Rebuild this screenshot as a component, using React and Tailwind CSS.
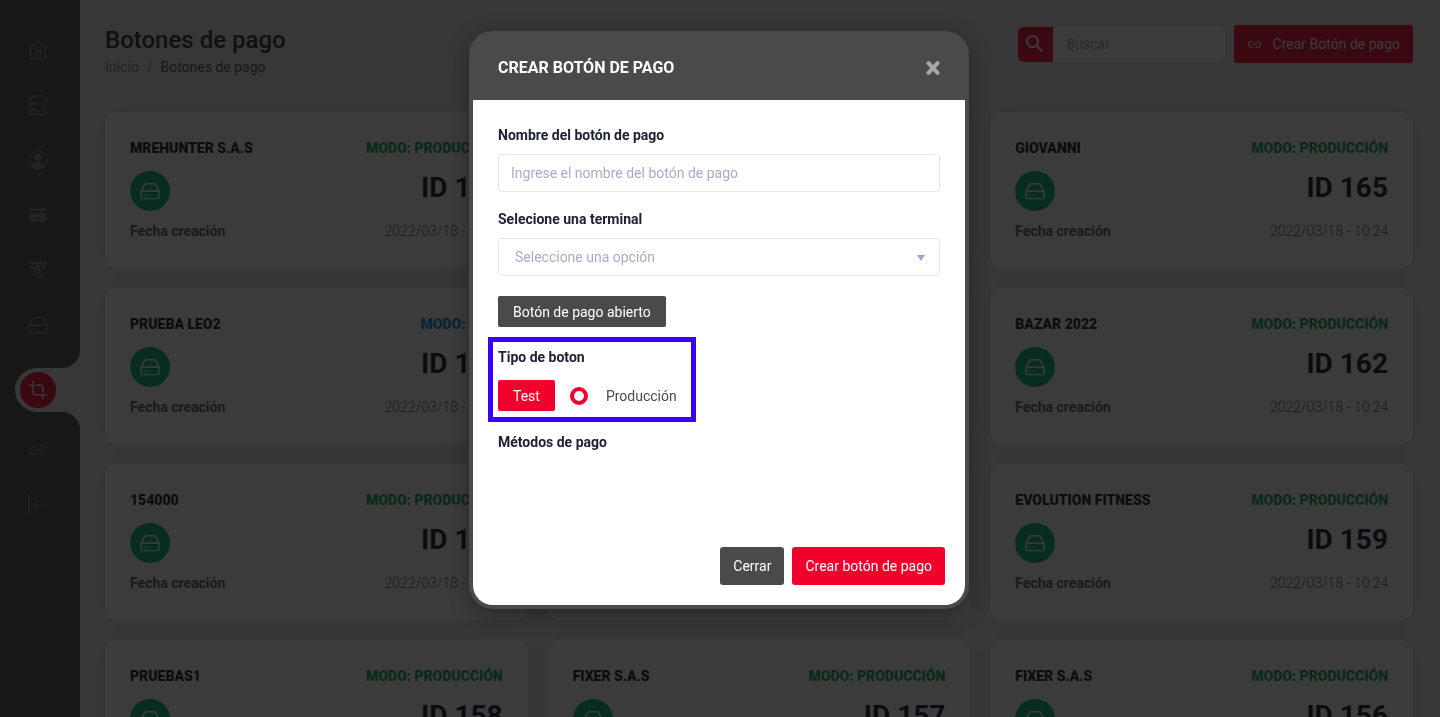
import { useState } from 'react';
import { BsPersonCircle } from 'react-icons/bs';
import { IoLinkOutline, IoCropOutline } from 'react-icons/io5';
import { MdSearch } from 'react-icons/md';

const BUTTONS = [
  { id: 167, name: 'MREHUNTER S.A.S', mode: 'PRODUCCIÓN' },
  { id: 166, name: 'FIXER S.A.S', mode: 'PRODUCCIÓN' },
  { id: 165, name: 'GIOVANNI', mode: 'PRODUCCIÓN' },
  { id: 164, name: 'PRUEBA LEO2', mode: 'TEST' },
  { id: 163, name: 'FIXER S.A.S', mode: 'PRODUCCIÓN' },
  { id: 162, name: 'BAZAR 2022', mode: 'PRODUCCIÓN' },
  { id: 161, name: '154000', mode: 'PRODUCCIÓN' },
  { id: 160, name: 'FIXER S.A.S', mode: 'PRODUCCIÓN' },
  { id: 159, name: 'EVOLUTION FITNESS', mode: 'PRODUCCIÓN' },
  { id: 158, name: 'PRUEBAS1', mode: 'PRODUCCIÓN' },
  { id: 157, name: 'FIXER S.A.S', mode: 'PRODUCCIÓN' },
  { id: 156, name: 'FIXER S.A.S', mode: 'PRODUCCIÓN' },
];

const HomeIcon = () => (
  <svg className="w-5 h-5" viewBox="0 0 20 20" fill="none" stroke="currentColor" strokeWidth="1.2">
    <path d="M.8 8.2 10 1l9.200 7.200M2.700 7v12.200h14.600V7M7.400 19v-7.600h5.200V19" />
  </svg>
);

const ShopIcon = () => (
  <svg className="w-5 h-5" viewBox="0 0 20 20" fill="none" stroke="currentColor" strokeWidth="1.200" strokeLinejoin="round">
    <path d="M5 1h10l4.200 4.400V7a2.300 2.300 0 0 1-4.600 0 2.300 2.300 0 0 1-4.600 0 2.300 2.300 0 0 1-4.600 0A2.300 2.300 0 0 1 .8 7V5.400L5 1ZM2.200 10v9M17.800 10v9M.5 19.300h19M4.800 12v4.200h10.400V12" />
  </svg>
);

const CardIcon = () => (
  <svg className="w-5 h-5" viewBox="0 0 20 20" fill="currentColor">
    <path fillRule="evenodd" d="M2.500 3.500h15a1.200 1.200 0 0 1 1.200 1.200V6H1.300V4.700a1.200 1.200 0 0 1 1.200-1.200ZM1.300 8.300h17.400v7a1.200 1.200 0 0 1-1.200 1.200h-15a1.200 1.200 0 0 1-1.200-1.200v-7Zm2 4.200v1.400h1.600v-1.400H3.300Zm3.200 0v1.400h6v-1.400h-6Z" />
  </svg>
);

const MedalIcon = () => (
  <svg className="w-5 h-5" viewBox="0 0 20 20" fill="currentColor">
    <path d="M1.600 1.800h16.800v2.400H1.600zM2.200 5h4v4.600H4.400L2.200 7.400zM7.400 5h5.200v4H7.400zM13.800 5h4v2.400l-2.200 2.200h-1.800z" />
    <circle cx="10" cy="13.800" r="4" fill="none" stroke="currentColor" strokeWidth="1.500" />
    <circle cx="10" cy="13.800" r="1.800" />
  </svg>
);

const TerminalIcon = () => (
  <svg className="w-5 h-5" viewBox="0 0 20 20" fill="none" stroke="currentColor" strokeWidth="1.400" strokeLinejoin="round">
    <path d="M6 2.800h8a1.800 1.800 0 0 1 1.600 1L19 10.200v5.600a1.800 1.800 0 0 1-1.800 1.800H2.800A1.800 1.800 0 0 1 1 15.800v-5.600l3.400-6.400a1.800 1.800 0 0 1 1.600-1ZM1 10.300h18M4.400 13.200v1.600M8.400 13.200v1.600" />
  </svg>
);

const CollapseIcon = () => (
  <svg className="w-5 h-5" viewBox="0 0 20 20" fill="none" stroke="currentColor" strokeWidth="1.200">
    <path d="M.8 0v20M19.800 10H5M10.500 4.500 5 10l5.500 5.500" />
  </svg>
);

const MENU_TOP = [
  { label: 'Inicio', Icon: HomeIcon },
  { label: 'Comercios', Icon: ShopIcon },
  { label: 'Perfil', Icon: BsPersonCircle },
  { label: 'Tarjetas', Icon: CardIcon },
  { label: 'Retiros', Icon: MedalIcon },
  { label: 'Terminales', Icon: TerminalIcon },
];

const MENU_BOTTOM = [
  { label: 'Links de pago', Icon: IoLinkOutline },
  { label: 'Contraer', Icon: CollapseIcon },
];

function MenuLink({ label, Icon }) {
  return (
    <a href="#" aria-label={label} className="flex h-[55px] w-[75px] items-center justify-center text-[#8a8a8a]">
      <Icon className="h-5 w-5" />
    </a>
  );
}

function Sidebar() {
  return (
    <nav className="flex w-20 shrink-0 flex-col bg-[#4b4b4b] pt-[22px]">
      {MENU_TOP.map((item) => (
        <MenuLink key={item.label} {...item} />
      ))}
      {/* current section, cut out of the bar */}
      <div className="relative mt-4 ml-[15px] flex h-11 items-center rounded-l-full bg-[#ebebeb] pl-[5px]">
        <svg className="absolute right-0 -top-[18px] h-[18px] w-[18px]" viewBox="0 0 18 18" fill="#ebebeb">
          <path d="M18 0v18H0A18 18 0 0 0 18 0Z" />
        </svg>
        <a href="#" aria-label="Botones de pago" aria-current="page" className="flex h-9 w-9 items-center justify-center rounded-full bg-[#f2002c] text-white">
          <IoCropOutline className="h-[22px] w-[22px]" />
        </a>
        <svg className="absolute right-0 -bottom-[18px] h-[18px] w-[18px]" viewBox="0 0 18 18" fill="#ebebeb">
          <path d="M18 18V0H0A18 18 0 0 1 18 18Z" />
        </svg>
      </div>
      <div className="pt-[10px]">
        {MENU_BOTTOM.map((item) => (
          <MenuLink key={item.label} {...item} />
        ))}
      </div>
    </nav>
  );
}

function PaymentCard({ id, name, mode }) {
  return (
    <article className="rounded-xl bg-white px-[25px] py-[25px] shadow-[0_0_30px_rgba(0,0,0,0.05)]">
      <div className="flex items-center justify-between text-sm leading-[22px] font-black text-[#181828]">
        <h2>{name}</h2>
        <span className={mode === 'TEST' ? 'text-[#008fe0]' : 'text-[#00a84c]'}>MODO: {mode}</span>
      </div>
      <div className="mt-3 flex items-start justify-between">
        <span className="flex h-10 w-10 items-center justify-center rounded-full bg-[#00b870] text-white">
          <TerminalIcon />
        </span>
        <span className="text-[28px] leading-[34px] font-bold text-[#181828]">ID {id}</span>
      </div>
      <div className="mt-2 flex items-center justify-between text-sm leading-6 text-[#5a5a5a]">
        <span className="font-bold">Fecha creación</span>
        <time className="font-light">2022/03/18 - 10:24</time>
      </div>
    </article>
  );
}

function CreateModal({ onClose }) {
  const [production, setProduction] = useState(false);

  return (
    <div className="fixed inset-0 flex items-start justify-center overflow-hidden bg-[#0a0a0a]/80 pr-0.5">
      <div
        role="dialog"
        aria-modal="true"
        aria-labelledby="modal-title"
        className="mt-[31px] w-[500px] max-w-full rounded-[24px] bg-[#4a4a4a] p-1 shadow-[0_5px_20px_rgba(0,0,0,0.35)]"
      >
        <header className="flex h-[65px] items-center justify-between px-[25px]">
          <h2 id="modal-title" className="text-base font-bold text-white">CREAR BOTÓN DE PAGO</h2>
          <button type="button" aria-label="Cerrar ventana" onClick={onClose} className="text-[#a6a6a6]">
            <svg className="h-[14px] w-[14px]" viewBox="0 0 14 14" stroke="currentColor" strokeWidth="4" strokeLinecap="round">
              <path d="m2.500 2.200 9 9.600m0-9.600-9 9.600" />
            </svg>
          </button>
        </header>

        <div className="rounded-b-[20px] bg-white">
          <form className="px-[25px] pt-6 text-sm" onSubmit={(e) => e.preventDefault()}>
            <label htmlFor="name" className="block leading-[22px] font-bold text-[#212134]">Nombre del botón de pago</label>
            <input
              id="name"
              type="text"
              placeholder="Ingrese el nombre del botón de pago"
              className="mt-2 block h-[38px] w-full rounded border border-[#e4e4f5] px-3 placeholder:text-[#aaaaca]"
            />

            <label htmlFor="terminal" className="mt-4 block leading-[22px] font-bold text-[#212134]">Selecione una terminal</label>
            <div className="relative mt-2">
              <select id="terminal" className="block h-[38px] w-full appearance-none rounded border border-[#e4e4f5] bg-white px-4 text-[#aaaaca]">
                <option>Seleccione una opción</option>
              </select>
              <svg className="pointer-events-none absolute top-[17px] right-[15px] h-[6px] w-2" viewBox="0 0 8 6" fill="#a2a2c8">
                <path d="M0 0h8L4 6z" />
              </svg>
            </div>

            <button type="button" className="mt-5 block h-[31px] rounded-[2px] bg-[#4a4a4a] px-[15px] text-white">Botón de pago abierto</button>

            <div className="relative mt-[19px] w-fit">
              <div className="pointer-events-none absolute -inset-x-[10px] -top-[9px] -bottom-[11px] border-[5px] border-[#3a00ff]" />
              <p className="leading-[22px] font-bold text-[#212134]">Tipo de boton</p>
              <div className="mt-3 flex items-center pr-[9px]">
                <button type="button" onClick={() => setProduction(false)} className="h-[31px] rounded-[2px] bg-[#f2002c] px-[15px] text-white">Test</button>
                <input
                  id="production"
                  type="radio"
                  checked={production}
                  onChange={() => setProduction(true)}
                  className="ml-[15px] h-[18px] w-[18px] appearance-none rounded-full border-4 border-[#f2002c] checked:bg-[#f2002c]"
                />
                <label htmlFor="production" className="ml-[18px] text-[#4a4a4a]">Producción</label>
              </div>
            </div>

            <p className="mt-5 leading-[22px] font-bold text-[#212134]">Métodos de pago</p>
          </form>

          <footer className="mt-[94px] flex justify-end gap-2 px-5 pb-5 text-sm">
            <button type="button" onClick={onClose} className="h-[38px] rounded-[3px] bg-[#4a4a4a] px-[13px] text-white">Cerrar</button>
            <button type="button" className="h-[38px] rounded-[3px] bg-[#f2002c] px-[13px] text-white">Crear botón de pago</button>
          </footer>
        </div>
      </div>
    </div>
  );
}

export default function App() {
  const [open, setOpen] = useState(true);

  return (
    <div className="flex h-screen overflow-hidden bg-[#ebebeb] font-['Roboto',sans-serif]">
      <Sidebar />
      <main className="min-w-0 flex-1 pt-[25px] pr-[27px] pl-[25px]">
        <div className="flex items-start justify-between">
          <div>
            <h1 className="text-2xl leading-[30px] font-medium text-[#282830]">Botones de pago</h1>
            <nav aria-label="Ruta" className="flex gap-2 text-sm leading-6">
              <a href="#" className="text-[#8c8c8c]">Inicio</a>
              <span className="text-[#8c8c8c]">/</span>
              <span className="text-[#4a4a4a]">Botones de pago</span>
            </nav>
          </div>
          <div className="flex items-center gap-[9px] text-sm">
            <div className="flex h-[35px] overflow-hidden rounded-md">
              <button type="button" aria-label="Buscar" className="flex w-[35px] items-center justify-center bg-[#f2002c] text-white">
                <MdSearch className="h-6 w-6" />
              </button>
              <input type="search" aria-label="Buscar" placeholder="Buscar" className="w-[172px] bg-white px-[14px] placeholder:text-[#a4a4a4]" />
            </div>
            <button type="button" onClick={() => setOpen(true)} className="flex h-[38px] items-center gap-[11px] rounded-[3px] bg-[#f2002c] px-[13px] text-white">
              <IoLinkOutline className="h-[15px] w-[15px]" />
              Crear Botón de pago
            </button>
          </div>
        </div>

        <div className="mt-[33px] grid grid-cols-3 gap-5">
          {BUTTONS.map((item) => (
            <PaymentCard key={item.id} {...item} />
          ))}
        </div>
      </main>

      {open && <CreateModal onClose={() => setOpen(false)} />}
    </div>
  );
}
